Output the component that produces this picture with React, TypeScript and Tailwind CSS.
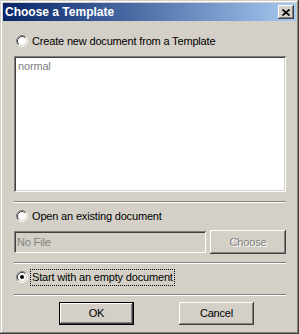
import React from 'react';

const font = "font-['Liberation_Sans',Arial,sans-serif]";
const raised =
  'shadow-[inset_-1px_-1px_#404040,inset_1px_1px_#ffffff,inset_-2px_-2px_#808080,inset_2px_2px_#d4d0c8]';
const sunken =
  'shadow-[inset_1px_1px_#808080,inset_-1px_-1px_#ffffff,inset_2px_2px_#404040,inset_-2px_-2px_#d4d0c8]';

function Radio({ checked = false }: { checked?: boolean }) {
  return (
    <svg width="12" height="12" viewBox="0 0 12 12" className="shrink-0">
      <circle cx="6" cy="6" r="5" fill="#ffffff" />
      <path d="M2.11 9.89 A5.5 5.5 0 0 1 9.89 2.11" fill="none" stroke="#808080" strokeWidth="1" />
      <path d="M9.89 2.11 A5.5 5.5 0 0 1 2.11 9.89" fill="none" stroke="#ffffff" strokeWidth="1" />
      <path d="M2.82 9.18 A4.5 4.5 0 0 1 9.18 2.82" fill="none" stroke="#404040" strokeWidth="1" />
      <path d="M9.18 2.82 A4.5 4.5 0 0 1 2.82 9.18" fill="none" stroke="#d4d0c8" strokeWidth="1" />
      {checked && <circle cx="6" cy="6" r="2" fill="#000000" />}
    </svg>
  );
}

function Separator({ className = '' }: { className?: string }) {
  return <div className={`h-[2px] border-t border-t-[#808080] border-b border-b-white ${className}`} />;
}

function RadioRow({ label, checked = false, focused = false, className = '' }: { label: string; checked?: boolean; focused?: boolean; className?: string }) {
  return (
    <div className={`flex h-[16px] items-center pl-[2px] ${className}`}>
      <Radio checked={checked} />
      <span
        className={`ml-[3px] px-[1px] leading-[15px] text-black ${
          focused ? 'outline-1 outline-dotted outline-black' : ''
        }`}
      >
        {label}
      </span>
    </div>
  );
}

export default function App() {
  return (
    <div className={`${font} text-[11px] tracking-[-0.17px] w-[299px] h-[334px] bg-[#d4d0c8] p-[3px] flex flex-col shadow-[inset_-1px_-1px_#404040,inset_1px_1px_#d4d0c8,inset_-2px_-2px_#808080,inset_2px_2px_#ffffff]`}>
      {/* title bar */}
      <div className="h-[18px] flex items-center justify-between bg-linear-to-r from-[#0a246a] to-[#a6caf0] pl-[2px] pr-[2px]">
        <span className="text-white font-bold text-[12px] tracking-normal leading-none">Choose a Template</span>
        <button className={`w-[16px] h-[14px] bg-[#d4d0c8] flex items-center justify-center ${raised}`}>
          <svg width="8" height="7" viewBox="0 0 8 7">
            <path d="M0.5 0.5 L7.5 6.5 M7.5 0.5 L0.5 6.5" stroke="#000" strokeWidth="1.6" />
          </svg>
        </button>
      </div>

      <div className="flex flex-col pl-[11px] pr-[10px]">
        <RadioRow label="Create new document from a Template" className="mt-[12px]" />

        <div className={`mt-[7px] h-[136px] bg-white px-[4px] pt-[4px] ${sunken}`}>
          <div className="text-[#808080] leading-[13px]">normal</div>
        </div>

        <Separator className="mt-[9px]" />

        <RadioRow label="Open an existing document" className="mt-[5px]" />

        <div className="mt-[6px] flex items-center gap-[4px]">
          <div className={`flex-1 h-[22px] flex items-center px-[3px] text-[#808080] ${sunken}`}>No File</div>
          <button className={`w-[76px] h-[24px] flex items-center justify-center text-[#808080] [text-shadow:1px_1px_0_#ffffff] ${raised}`}>
            Choose
          </button>
        </div>

        <Separator className="mt-[8px]" />

        <RadioRow label="Start with an empty document" checked focused className="mt-[5px]" />

        <Separator className="mt-[9px]" />

        <div className="mt-[6px] flex pl-[45px] gap-[45px]">
          <div className="border border-black">
            <button className={`w-[73px] h-[21px] flex items-center justify-center text-black ${raised}`}>OK</button>
          </div>
          <button className={`w-[75px] h-[23px] flex items-center justify-center text-black ${raised}`}>Cancel</button>
        </div>
      </div>
    </div>
  );
}
